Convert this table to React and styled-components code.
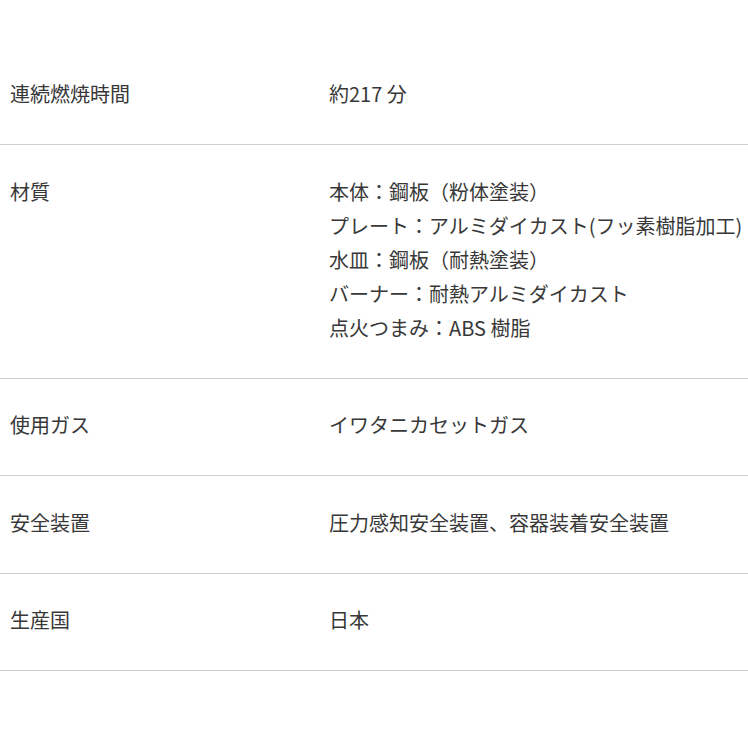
import React from "react";
import styled, { createGlobalStyle } from "styled-components";

const Global = createGlobalStyle`
  html, body { margin: 0; padding: 0; background: #fff; overflow: hidden; }
  body { font-family: "Noto Sans CJK JP", "Noto Sans", sans-serif; color: #383838; }
`;

const Table = styled.div`
  width: 748px;
  padding-top: 47.5px;
  display: flex;
  flex-direction: column;
`;

const Row = styled.div`
  display: flex;
  border-bottom: 1px solid #cfcfcf;
  padding: 29.5px 0 33px;
  font-size: 20px;
  line-height: 34px;
`;

const Label = styled.div`
  flex: 0 0 329px;
  padding-left: 10px;
  box-sizing: border-box;
  white-space: nowrap;
`;

const Value = styled.div`
  flex: 1;
  white-space: nowrap;
`;

const Line = styled.div``;

const rows = [
  ["連続燃焼時間", ["約217 分"]],
  ["材質", [
    "本体：鋼板（粉体塗装）",
    "プレート：アルミダイカスト(フッ素樹脂加工)",
    "水皿：鋼板（耐熱塗装）",
    "バーナー：耐熱アルミダイカスト",
    "点火つまみ：ABS 樹脂",
  ]],
  ["使用ガス", ["イワタニカセットガス"]],
  ["安全装置", ["圧力感知安全装置、容器装着安全装置"]],
  ["生産国", ["日本"]],
];

export default function App() {
  return (
    <>
      <Global />
      <Table>
        {rows.map(([label, values]) => (
          <Row key={label}>
            <Label>{label}</Label>
            <Value>
              {values.map((v) => (
                <Line key={v}>{v}</Line>
              ))}
            </Value>
          </Row>
        ))}
      </Table>
    </>
  );
}
